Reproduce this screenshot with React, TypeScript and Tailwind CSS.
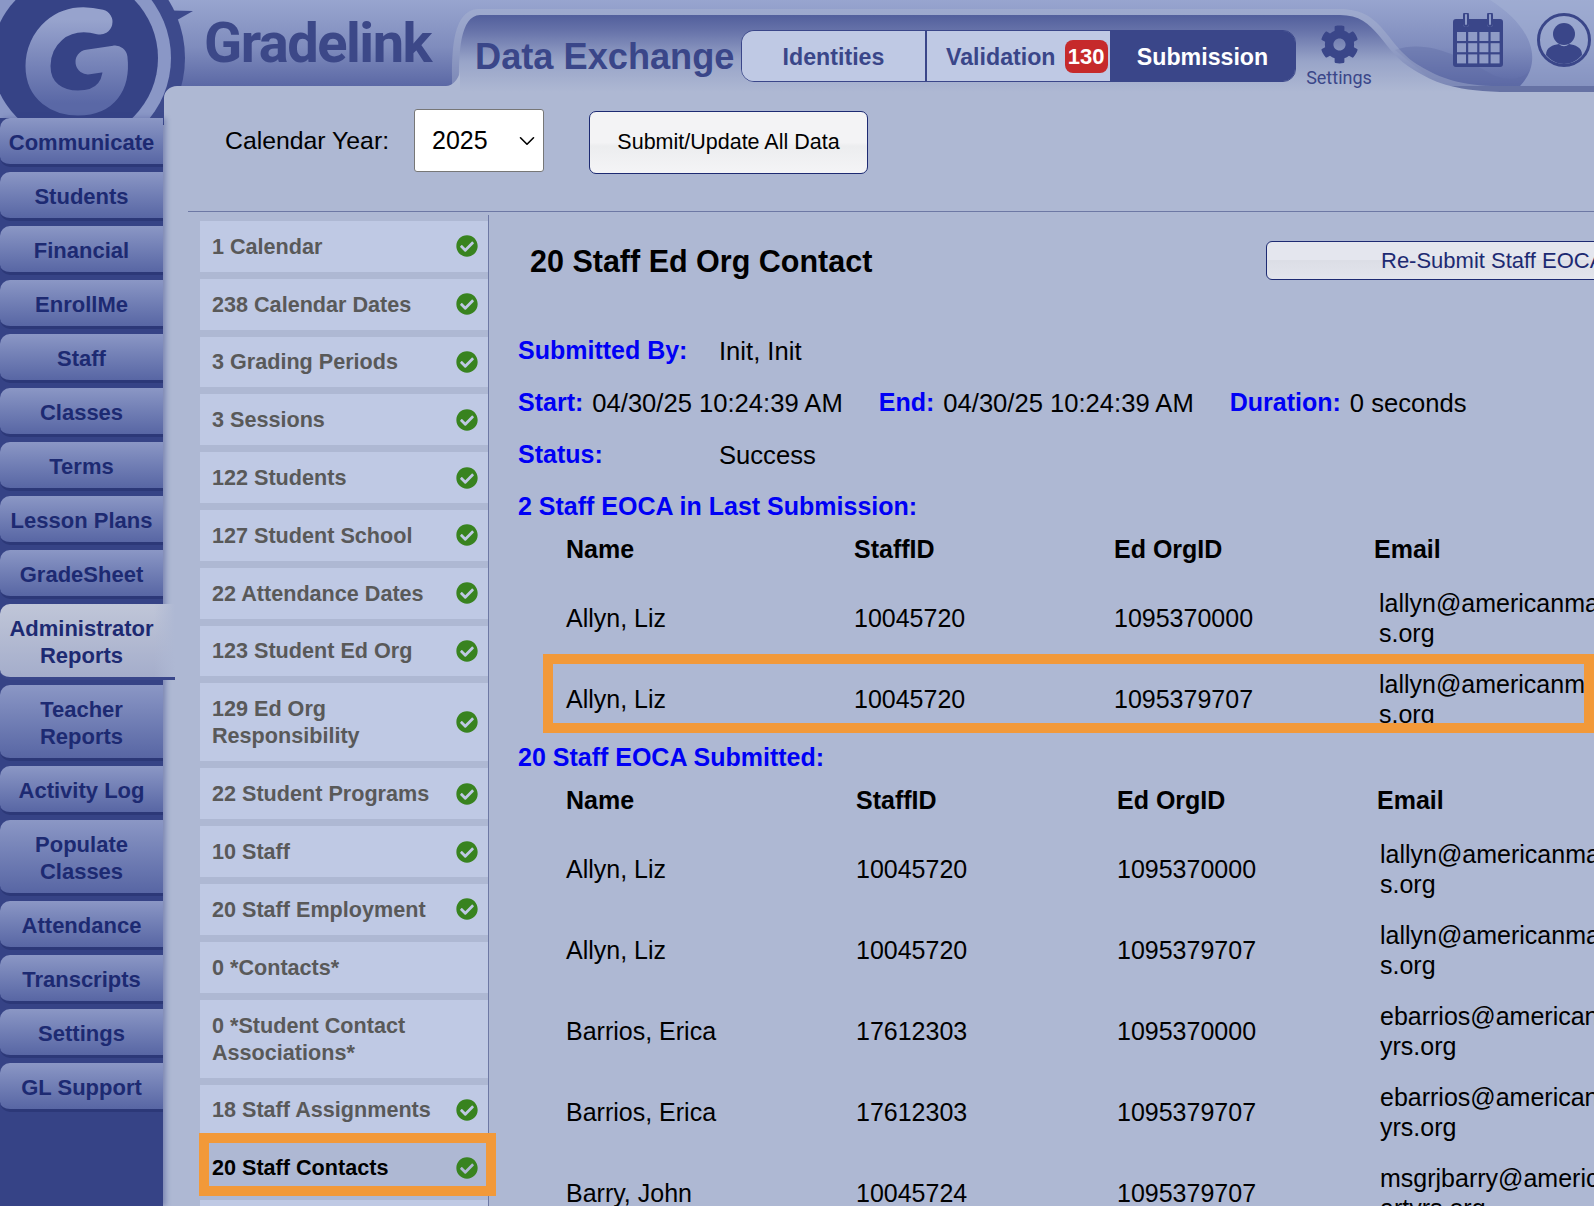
import type { ReactNode } from 'react';
import { ChevronDown } from 'lucide-react';
import { FaCheckCircle, FaCog } from 'react-icons/fa';

const navItems = [
  { label: ['Communicate'] },
  { label: ['Students'] },
  { label: ['Financial'] },
  { label: ['EnrollMe'] },
  { label: ['Staff'] },
  { label: ['Classes'] },
  { label: ['Terms'] },
  { label: ['Lesson Plans'] },
  { label: ['GradeSheet'] },
  { label: ['Administrator', 'Reports'], active: true },
  { label: ['Teacher', 'Reports'] },
  { label: ['Activity Log'] },
  { label: ['Populate', 'Classes'] },
  { label: ['Attendance'] },
  { label: ['Transcripts'] },
  { label: ['Settings'] },
  { label: ['GL Support'] },
];

const steps = [
  { label: ['1 Calendar'], done: true },
  { label: ['238 Calendar Dates'], done: true },
  { label: ['3 Grading Periods'], done: true },
  { label: ['3 Sessions'], done: true },
  { label: ['122 Students'], done: true },
  { label: ['127 Student School'], done: true },
  { label: ['22 Attendance Dates'], done: true },
  { label: ['123 Student Ed Org'], done: true },
  { label: ['129 Ed Org', 'Responsibility'], done: true },
  { label: ['22 Student Programs'], done: true },
  { label: ['10 Staff'], done: true },
  { label: ['20 Staff Employment'], done: true },
  { label: ['0 *Contacts*'], done: false },
  { label: ['0 *Student Contact', 'Associations*'], done: false },
  { label: ['18 Staff Assignments'], done: true },
  { label: ['20 Staff Contacts'], done: true, active: true },
];

const lastRows = [
  ['Allyn, Liz', '10045720', '1095370000', 'lallyn@americanmaaaaa', 's.org'],
  ['Allyn, Liz', '10045720', '1095379707', 'lallyn@americanmaaaaa', 's.org'],
];

const submittedRows = [
  ['Allyn, Liz', '10045720', '1095370000', 'lallyn@americanmaaaaa', 's.org'],
  ['Allyn, Liz', '10045720', '1095379707', 'lallyn@americanmaaaaa', 's.org'],
  ['Barrios, Erica', '17612303', '1095370000', 'ebarrios@americanmonth', 'yrs.org'],
  ['Barrios, Erica', '17612303', '1095379707', 'ebarrios@americanmonth', 'yrs.org'],
  ['Barry, John', '10045724', '1095379707', 'msgrjbarry@americanm', 'artyrs.org'],
];

function HeaderArt() {
  return (
    <svg className="absolute left-0 top-0" width="1594" height="125" viewBox="0 0 1594 125">
      <defs>
        <linearGradient id="strip" x1="0" y1="0" x2="0" y2="1">
          <stop offset="0" stopColor="#98a5cf" />
          <stop offset="0.55" stopColor="#7f8cbd" />
          <stop offset="1" stopColor="#5b68a5" />
        </linearGradient>
        <linearGradient id="tab" x1="0" y1="0" x2="0" y2="1">
          <stop offset="0" stopColor="#525f9c" />
          <stop offset="0.2" stopColor="#6672a9" />
          <stop offset="0.6" stopColor="#98a4c8" />
          <stop offset="1" stopColor="#aeb8d3" />
        </linearGradient>
        <linearGradient id="ge" x1="0" y1="0" x2="0" y2="1">
          <stop offset="0" stopColor="#97a3cd" />
          <stop offset="1" stopColor="#5a68a6" />
        </linearGradient>
      </defs>
      <rect width="1594" height="125" fill="#364386" />
      <rect width="1594" height="86" fill="url(#strip)" />
      <path d="M1490 0 H1594 V86 H1520 C1545 60 1530 25 1490 0Z" fill="#a4b0d3" opacity="0.6" />
      <path d="M1395 50 C1430 38 1465 60 1495 76 C1510 82 1525 78 1530 70 L1520 86 H1440Z" fill="#5e6ba6" opacity="0.4" />
      {/* logo */}
      <path d="M150 10 L193 11 L170 24 Z" fill="#3d4a8c" />
      <circle cx="75" cy="58" r="110" fill="#3d4a8c" />
      <circle cx="75" cy="58" r="96" fill="#8a97c6" />
      <circle cx="75" cy="58" r="83" fill="#364386" />
      <path d="M100 22 C60 12 38 40 38 66 C38 92 58 103 78 103 C106 103 118 85 115 58 L88 62" fill="none" stroke="url(#ge)" strokeWidth="25" strokeLinecap="round" strokeLinejoin="round" />
      {/* swoosh tab */}
      <path d="M452 88 C452 60 450 10 478 9 H1340 C1385 9 1385 46 1420 66 C1440 78 1460 86 1500 86 H1594 V92 H452Z" fill="#aeb8d3" opacity="0.4" />
      <path d="M459 88 C459 60 458 16 480 15 H1340 C1378 15 1380 50 1414 70 C1434 82 1450 90 1500 92 H459Z" fill="url(#tab)" />
      {/* panel */}
      <path d="M164 125 V98 C164 91 170 86 177 86 H446 C452 86 458 80 460 72 V92 H1594 V125Z" fill="#aeb8d3" />
    </svg>
  );
}

function CalendarIcon() {
  return (
    <svg width="50" height="54" viewBox="0 0 50 54">
      <path d="M3 6 H10 V11 A3 3 0 0 0 16 11 V6 H34 V11 A3 3 0 0 0 40 11 V6 H47 A3 3 0 0 1 50 9 V51 A3 3 0 0 1 47 54 H3 A3 3 0 0 1 0 51 V9 A3 3 0 0 1 3 6Z" fill="#3a4689" />
      <rect x="11" y="0" width="4" height="13" rx="2" fill="none" stroke="#3a4689" strokeWidth="2" />
      <rect x="35" y="0" width="4" height="13" rx="2" fill="none" stroke="#3a4689" strokeWidth="2" />
      {[0, 1, 2, 3].map((c) =>
        [0, 1, 2].map((r) => (
          <rect key={`${c}-${r}`} x={4 + c * 11.2} y={19 + r * 11.2} width="9" height="9" fill="#8f9bc6" />
        )),
      )}
    </svg>
  );
}

function UserIcon() {
  return (
    <svg width="54" height="54" viewBox="0 0 54 54">
      <circle cx="27" cy="27" r="25.5" fill="none" stroke="#3a4689" strokeWidth="3" />
      <circle cx="27" cy="21" r="11" fill="#3a4689" />
      <path d="M9 42 C9 34 16 32 22 31 C25 34 29 34 32 31 C38 32 45 34 45 42 C40 48 33 51 27 51 C21 51 14 48 9 42Z" fill="#3a4689" />
    </svg>
  );
}

function NavButton({ label, active }: { label: string[]; active?: boolean }) {
  return (
    <div
      className={`flex flex-col justify-center pt-[2px] text-center text-[22px] leading-[27px] font-bold text-[#1d2a72] rounded-l-[10px] border-b-[3px] ${
        label.length > 1 ? 'h-[76px]' : 'h-[49px]'
      } ${
        active
          ? 'w-[175px] pr-[12px] bg-[linear-gradient(to_right,transparent_88%,#aeb8d3),linear-gradient(#c0c6d8,#a4adcb)] border-[#39468a]'
          : 'w-[163px] bg-gradient-to-b from-[#8b97c5] to-[#5866a4] border-[#2c3878]'
      }`}
    >
      {label.map((l) => (
        <span key={l}>{l}</span>
      ))}
    </div>
  );
}

function StepRow({ label, done, active }: { label: string[]; done: boolean; active?: boolean }) {
  return (
    <div
      className={`relative flex items-center justify-between pl-[12px] pr-[10px] text-[21.6px] leading-[27px] font-bold ${
        label.length > 1 ? 'h-[78px]' : 'h-[50.8px]'
      } ${active ? 'text-black' : 'bg-[#bfc9e4] text-[#595959]'}`}
    >
      <div>
        {label.map((l) => (
          <div key={l}>{l}</div>
        ))}
      </div>
      {done && <FaCheckCircle className="text-[#38831f] text-[22px] shrink-0" />}
      {active && <div className="absolute -left-[1px] -right-[8px] -top-[9px] -bottom-[3px] border-[10px] border-[#f29939]" />}
    </div>
  );
}

function ContactTable({ rows, heading, columns, emailOffset, highlight, className }: {
  rows: string[][];
  heading: string;
  columns: string;
  emailOffset: string;
  highlight?: number;
  className: string;
}) {
  return (
    <div className={className}>
      <div className="h-[41px] mb-[1px] flex items-center text-[#0000f5] font-bold text-[25px] whitespace-nowrap">{heading}</div>
      <div className={`grid ${columns} h-[44px] mb-[5px] items-center pl-[48px] font-bold text-[25px] text-black whitespace-nowrap`}>
        <div>Name</div>
        <div>StaffID</div>
        <div>Ed OrgID</div>
        <div>Email</div>
      </div>
      {rows.map((r, i) => (
        <div key={i} className={`relative grid ${columns} h-[81px] items-center pl-[48px] text-[25px] leading-[30px] text-black whitespace-nowrap`}>
          <div>{r[0]}</div>
          <div>{r[1]}</div>
          <div>{r[2]}</div>
          <div className={emailOffset}>
            <div>{r[3]}</div>
            <div>{r[4]}</div>
          </div>
          {highlight === i && <div className="absolute left-[25px] right-0 -top-[4px] h-[79px] border-[10px] border-[#f29939]" />}
        </div>
      ))}
    </div>
  );
}

function Info({ children }: { children: ReactNode }) {
  return <div className="h-[52px] flex items-center text-[25.6px] text-black whitespace-nowrap">{children}</div>;
}

function Blue({ children, className = '' }: { children: ReactNode; className?: string }) {
  return <span className={`text-[#0000f5] font-bold text-[25px] ${className}`}>{children}</span>;
}

export default function App() {
  return (
    <div className="relative w-[1594px] h-[1206px] overflow-hidden bg-[#aeb8d3] font-['Liberation_Sans',Arial,sans-serif]">
      <HeaderArt />

      <header className="relative h-[88px] flex items-start">
        <div className="ml-[204px] mt-[9px] w-[271px] font-['Roboto',sans-serif] font-bold text-[#3c4888] text-[56px] leading-[68px] tracking-[-1.5px] whitespace-nowrap">
          Gradelink
        </div>
        <div className="mt-[33px] w-[266px] text-[36.2px] leading-[48px] font-bold text-[#3a4689] whitespace-nowrap">Data Exchange</div>
        <div className="mt-[30px] w-[555px] h-[52px] flex rounded-[13px] overflow-hidden border border-[#3a4689] text-[23.2px] font-bold">
          <div className="w-[185px] pt-[3px] flex items-center justify-center bg-[#bfc9e4] text-[#3a4689] border-r-2 border-[#3a4689]">Identities</div>
          <div className="w-[183px] flex items-center pl-[19px] gap-[9px] bg-[#bfc9e4] text-[#3a4689]">
            <span className="pt-[3px]">Validation</span>
            <span className="w-[43px] h-[33px] rounded-[8px] bg-[#c62a2b] text-white text-[22px] flex items-center justify-center">130</span>
          </div>
          <div className="flex-1 pt-[3px] flex items-center justify-center bg-[#3a4689] text-white">Submission</div>
        </div>
        <div className="mt-[25px] ml-[10px] w-[66px] flex flex-col items-center text-[#3a4689]">
          <FaCog className="text-[39px]" />
          <span className="font-['Roboto',sans-serif] text-[18px] leading-[24px] mt-[2px]">Settings</span>
        </div>
        <div className="ml-[81px] mt-[13px]">
          <CalendarIcon />
        </div>
        <div className="ml-[34px] mt-[13px]">
          <UserIcon />
        </div>
      </header>

      <div className="relative flex h-[1118px]">
        <nav className="w-[163px] mt-[30px] shrink-0 flex flex-col gap-[5px] bg-[#364386] shadow-[3px_0_5px_rgba(54,67,134,0.4)]">
          {navItems.map((item) => (
            <NavButton key={item.label.join(' ')} label={item.label} active={item.active} />
          ))}
        </nav>

        <main className="flex-1 min-w-0 pl-[25px]">
          <div className="h-[124px] flex items-start border-b border-[#6d78a4]">
            <div className="ml-[37px] mt-[32px] w-[163px] text-[24.8px] leading-[42px] text-black whitespace-nowrap">Calendar Year:</div>
            <div className="ml-[26px] mt-[21px] w-[130px] h-[63px] bg-white border border-[#777] rounded-[3px] flex items-center justify-between pl-[17px] pr-[3px] text-[25px] text-black">
              2025
              <ChevronDown size={26} strokeWidth={1.5} />
            </div>
            <button className="ml-[45px] mt-[23px] w-[279px] h-[63px] rounded-[7px] border border-[#1d2a72] bg-[linear-gradient(#f3f3f5_50%,#ecedef_56%,#f4f4f6)] text-[21.5px] text-black">
              Submit/Update All Data
            </button>
          </div>

          <div className="flex">
            <aside className="w-[289px] ml-[12px] mt-[3px] pt-[6px] flex flex-col gap-[7px] shrink-0 border-r border-[#6d78a4]">
              {steps.map((s) => (
                <StepRow key={s.label.join(' ')} label={s.label} done={s.done} active={s.active} />
              ))}
              <div className="h-[51px] bg-[#bfc9e4]" />
            </aside>

            <section className="flex-1 min-w-0 pl-[29px]">
              <div className="h-[113px] flex items-start justify-between">
                <h1 className="ml-[12px] mt-[28px] text-[30.5px] leading-[42px] font-bold text-black whitespace-nowrap">20 Staff Ed Org Contact</h1>
                <button className="mt-[29px] w-[338px] shrink-0 -mr-[10px] h-[39px] rounded-[6px] border border-[#1d2a72] bg-[linear-gradient(#e4e6ee_50%,#dcdee6_50%,#e2e4ec)] text-[22px] text-[#1d2a72] text-left pl-[114px] whitespace-nowrap overflow-hidden">
                  Re-Submit Staff EOCA
                </button>
              </div>
              <Info>
                <Blue className="w-[201px]">Submitted By:</Blue>
                Init, Init
              </Info>
              <Info>
                <Blue className="mr-[9px]">Start:</Blue>
                04/30/25 10:24:39 AM
                <Blue className="ml-[36px] mr-[9px]">End:</Blue>
                04/30/25 10:24:39 AM
                <Blue className="ml-[36px] mr-[9px]">Duration:</Blue>
                0 seconds
              </Info>
              <Info>
                <Blue className="w-[201px]">Status:</Blue>
                Success
              </Info>
              <ContactTable
                className="mt-[5px]"
                rows={lastRows}
                heading="2 Staff EOCA in Last Submission:"
                columns="grid-cols-[288px_260px_260px_1fr]"
                emailOffset="ml-[5px]"
                highlight={1}
              />
              <ContactTable
                className="-mt-[2px]"
                rows={submittedRows}
                heading="20 Staff EOCA Submitted:"
                columns="grid-cols-[290px_261px_260px_1fr]"
                emailOffset="ml-[3px]"
              />
            </section>
          </div>
        </main>
      </div>
    </div>
  );
}
